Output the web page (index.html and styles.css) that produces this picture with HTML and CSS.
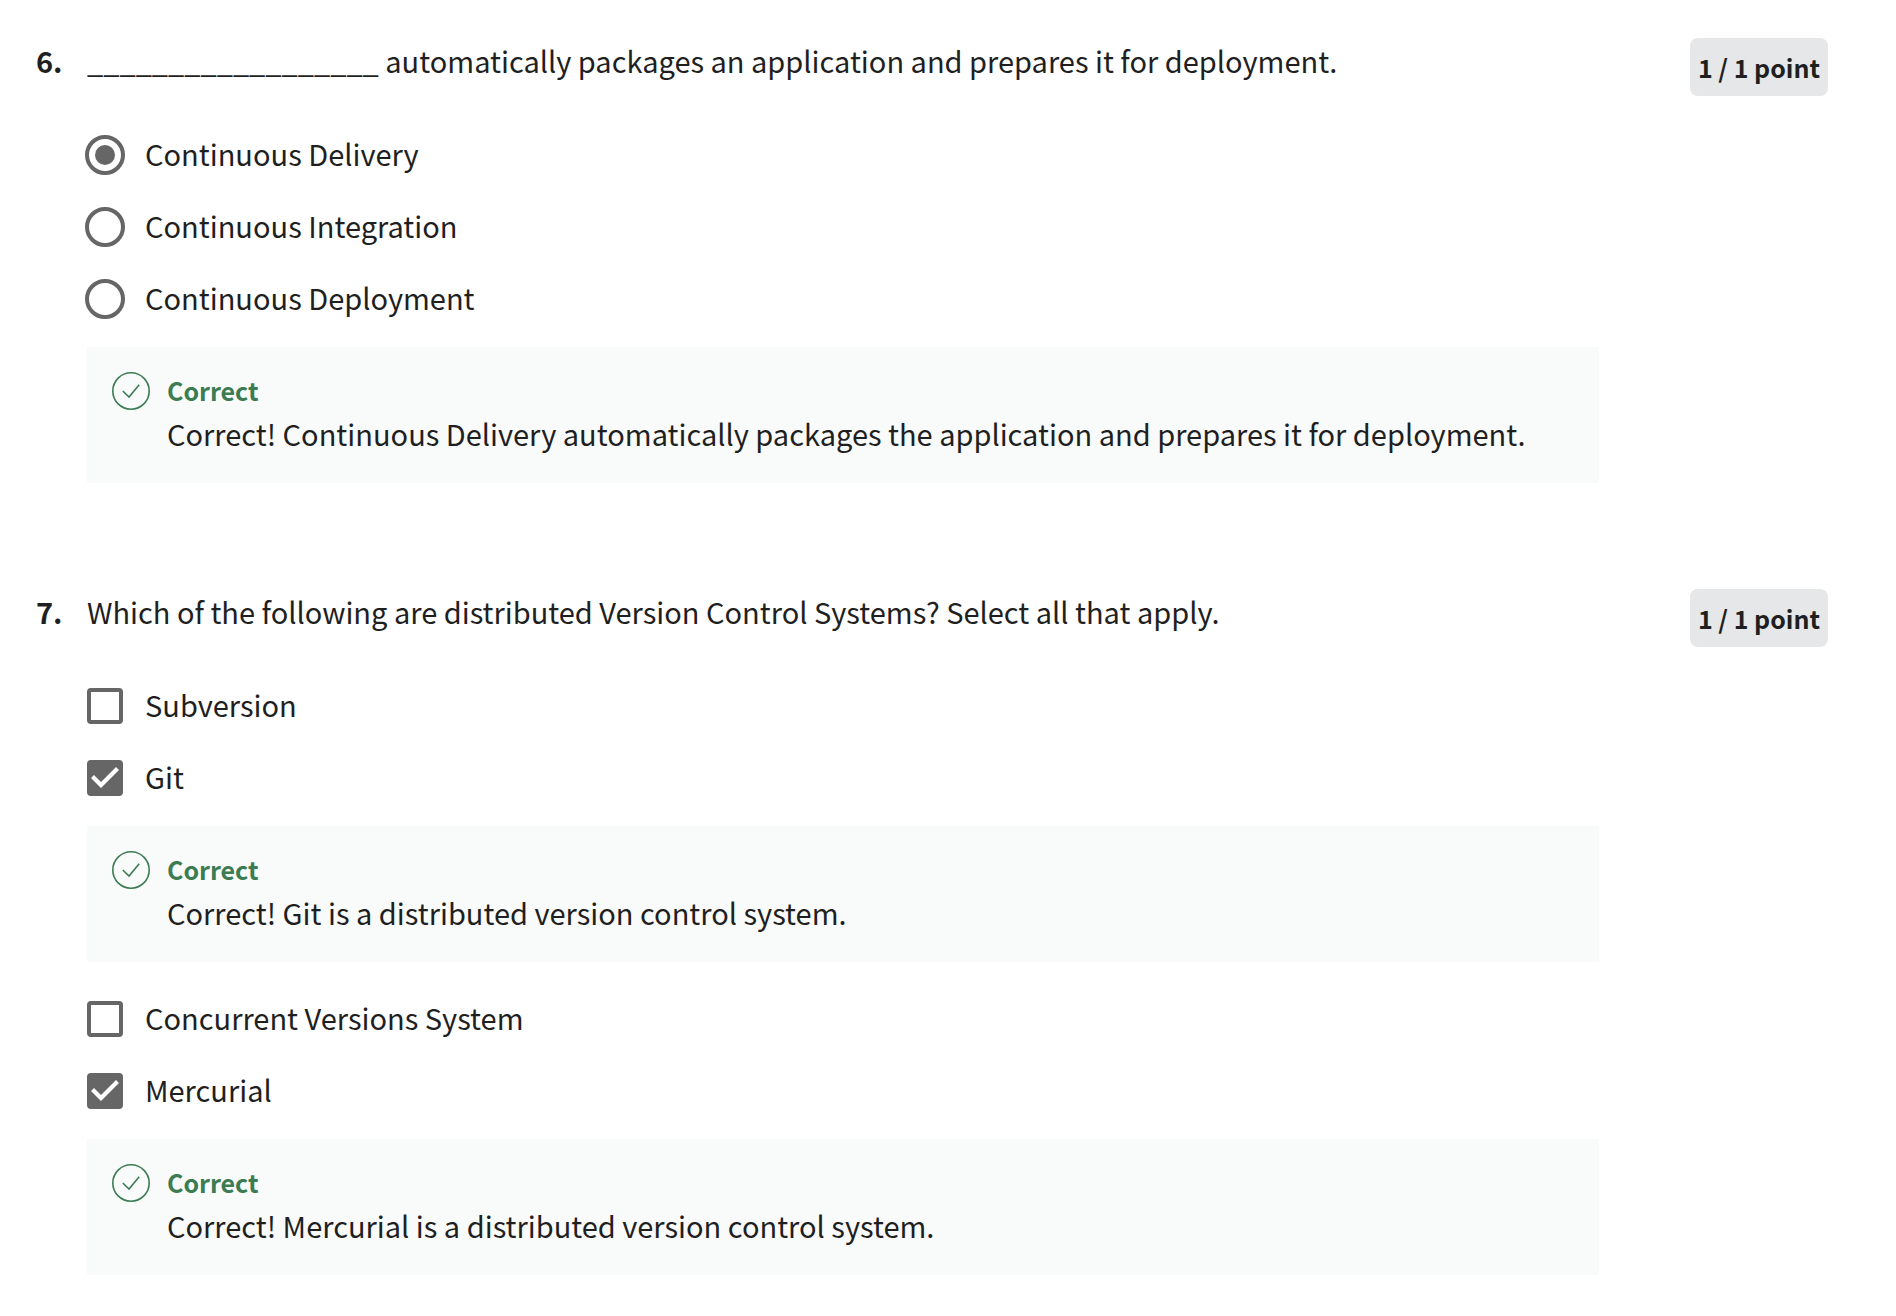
FILE: index.html
```html
<!DOCTYPE html>
<html lang="en">
<head>
<meta charset="utf-8">
<meta name="viewport" content="width=device-width, initial-scale=1">
<title>Quiz results</title>
<link rel="stylesheet" href="styles.css">
</head>
<body>
<svg class="sprite" aria-hidden="true">
  <symbol id="correct" viewBox="0 0 38 38">
    <circle cx="19" cy="19" r="18.2" fill="none" stroke="currentColor" stroke-width="1.6"/>
    <path d="M10.8 19 L17 25 L27.2 12.7" fill="none" stroke="currentColor" stroke-width="1.6"/>
  </symbol>
</svg>
<main class="quiz">
  <section class="question">
    <div class="number">6.</div>
    <div class="content">
      <p class="prompt" id="q6">__________________ automatically packages an application and prepares it for deployment.</p>
      <div class="options" role="radiogroup" aria-labelledby="q6">
        <label class="option"><input class="radio" type="radio" name="q6" checked><span class="text">Continuous Delivery</span></label>
        <label class="option"><input class="radio" type="radio" name="q6"><span class="text">Continuous Integration</span></label>
        <label class="option"><input class="radio" type="radio" name="q6"><span class="text">Continuous Deployment</span></label>
        <div class="feedback">
          <svg class="icon" aria-hidden="true"><use href="#correct"/></svg>
          <div>
            <p class="verdict">Correct</p>
            <p class="explanation">Correct! Continuous Delivery automatically packages the application and prepares it for deployment.</p>
          </div>
        </div>
      </div>
    </div>
    <div class="score"><span class="badge">1 / 1 point</span></div>
  </section>

  <section class="question">
    <div class="number">7.</div>
    <div class="content">
      <p class="prompt" id="q7">Which of the following are distributed Version Control Systems? Select all that apply.</p>
      <div class="options" role="group" aria-labelledby="q7">
        <label class="option"><input class="checkbox" type="checkbox"><span class="text">Subversion</span></label>
        <label class="option"><input class="checkbox" type="checkbox" checked><span class="text">Git</span></label>
        <div class="feedback">
          <svg class="icon" aria-hidden="true"><use href="#correct"/></svg>
          <div>
            <p class="verdict">Correct</p>
            <p class="explanation">Correct! Git is a distributed version control system.</p>
          </div>
        </div>
        <label class="option"><input class="checkbox" type="checkbox"><span class="text">Concurrent Versions System</span></label>
        <label class="option"><input class="checkbox" type="checkbox" checked><span class="text">Mercurial</span></label>
        <div class="feedback">
          <svg class="icon" aria-hidden="true"><use href="#correct"/></svg>
          <div>
            <p class="verdict">Correct</p>
            <p class="explanation">Correct! Mercurial is a distributed version control system.</p>
          </div>
        </div>
      </div>
    </div>
    <div class="score"><span class="badge">1 / 1 point</span></div>
  </section>
</main>
</body>
</html>
```
FILE: styles.css
```css
* {
  box-sizing: border-box;
}

body {
  margin: 0;
  background: #fff;
  color: #1f1f1f;
  font-family: "Source Sans Pro", "Noto Sans CJK SC", "Noto Sans", sans-serif;
  font-size: 29px;
  line-height: 48px;
}

p {
  margin: 0;
}

.sprite {
  display: none;
}

.quiz {
  display: flex;
  flex-direction: column;
  gap: 104px;
  padding: 36px 68px 40px 36px;
}

.question {
  display: grid;
  grid-template-columns: 51px 1fr 229px;
}

.number {
  font-weight: 700;
}

.options {
  display: flex;
  flex-direction: column;
  margin-top: 35px;
}

.option {
  display: flex;
  align-items: center;
  gap: 22px;
  min-height: 72px;
}

.text {
  padding-bottom: 4px;
}

.radio,
.checkbox {
  appearance: none;
  display: grid;
  place-content: center;
  flex: none;
  margin: 0;
  border: 4px solid #666;
  background: #fff;
}

.radio {
  width: 40px;
  height: 40px;
  margin: 0 -2px;
  border-radius: 50%;
}

.radio:checked::before {
  content: "";
  width: 20px;
  height: 20px;
  border-radius: 50%;
  background: #666;
}

.checkbox {
  width: 36px;
  height: 36px;
  border-radius: 4px;
}

.checkbox:checked {
  background: #666;
}

.checkbox:checked::before {
  content: "";
  width: 28px;
  height: 28px;
  background: #fff;
  clip-path: polygon(0 14px, 3px 11px, 10px 18px, 25px 3px, 28px 6px, 10px 24px);
}

.feedback {
  display: flex;
  gap: 17px;
  margin-top: 12px;
  padding: 21px 25px 29px;
  background: #f9fbfa;
}

.feedback + .option {
  margin-top: 21px;
}

.icon {
  flex: none;
  width: 38px;
  height: 38px;
  margin-top: 4px;
  color: #3b7c52;
}

.verdict {
  color: #3b7c52;
  font-size: 25px;
  font-weight: 700;
  line-height: 44px;
}

.explanation {
  line-height: 42px;
}

.score {
  padding-top: 2px;
  text-align: right;
}

.badge {
  display: inline-block;
  padding: 0 8px;
  border-radius: 8px;
  background: #e5e7e8;
  font-size: 25px;
  font-weight: 700;
  line-height: 58px;
  white-space: nowrap;
}
```
